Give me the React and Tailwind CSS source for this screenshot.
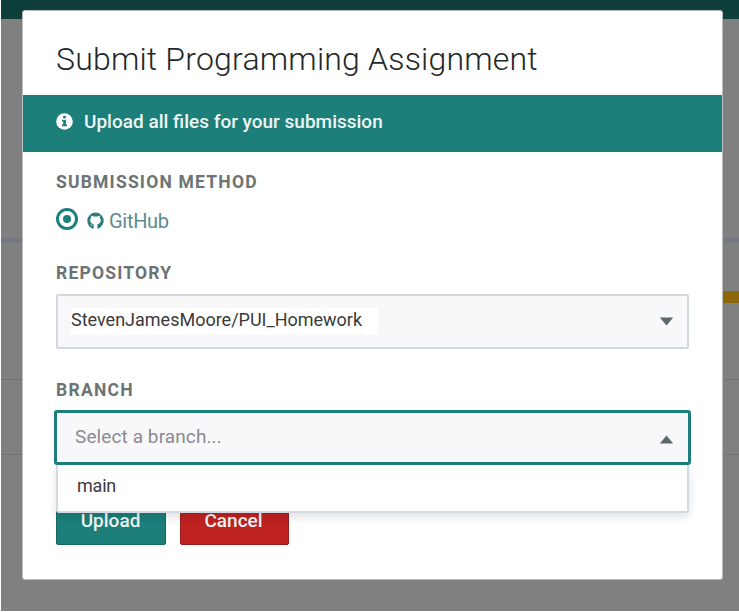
function InfoIcon() {
  return (
    <svg className="block h-[17px] w-[17px]" viewBox="0 0 17 17">
      <circle cx="8.5" cy="8.5" r="8.3" fill="#fff" />
      <path fill="#1c7f7a" d="M7.1 3h2.8v2.3H7.1zM6 6.7h3.9v4.8H11v1.7H6v-1.7h1.2V8.4H6z" />
    </svg>
  );
}

function GitHubIcon() {
  return (
    <svg className="block h-[17px] w-[17px]" viewBox="0 0 17 17">
      <path
        fill="#2f7d80"
        fillRule="evenodd"
        d="M8.500.5a8.200 8.200 0 0 1 8.200 8.200c0 3.700-2.400 6.700-5.700 7.800-.4 0-.6-.1-.6-.4v-2.600c0-.8-.2-1.200-.6-1.500 2-.2 3.700-1.100 3.700-3.900 0-.9-.3-1.600-.8-2.200.1-.4.3-1.200-.1-2.200-.8-.1-1.600.4-2.300.9a7.600 7.600 0 0 0-3.600 0C6 4.100 5.200 3.600 4.400 3.700c-.4 1-.2 1.800-.1 2.200-.5.6-.8 1.300-.8 2.200 0 2.800 1.700 3.700 3.700 3.900-.3.200-.5.600-.6 1.100-.8.400-1.700.3-2.200-.6-.4-.6-.9-.8-1.400-.8.7.4.9.9 1.200 1.600.4.800 1.200 1.100 2.400.9v1.900c0 .3-.2.4-.6.4A8.200 8.200 0 0 1 .3 8.700 8.200 8.200 0 0 1 8.500.5z M5 6.500c-.5.300-.7.800-.7 1.600 0 2.500 1.600 3.100 4.200 3.100s4.200-.6 4.200-3.100c0-.8-.2-1.300-.7-1.600-.8-.4-2 0-3.500 0s-2.700-.4-3.500 0z"
      />
      <path fill="#fff" d="M4 6.200c.8-1 1.600-.8 4.500-.8s3.700-.2 4.500.8c1.400 2.500.4 5.300-2.500 5.900.3.400.4.900.4 1.500V17H6.100v-3.400c0-.6.1-1.100.4-1.500C3.600 11.500 2.600 8.700 4 6.200z" />
      <path fill="#2f7d80" d="M5.300 12.500h1.400v4H5.300zM10.400 12.500h1.400v4h-1.400z" />
    </svg>
  );
}

function Backdrop() {
  return (
    <div className="flex h-[611px] flex-col bg-[#808080]">
      <div className="h-[19px] bg-[#0f3f3d]" />
      <div className="h-[219px]" />
      <div className="h-[5px] bg-[#757880]" />
      <div className="h-[48px]" />
      <div className="h-[12px] w-[40px] self-end bg-[#8c660a]" />
      <div className="h-[76px]" />
      <div className="h-px bg-[#727274]" />
      <div className="h-[74px]" />
      <div className="h-px bg-[#727274]" />
    </div>
  );
}

function Label({ children }) {
  return (
    <span className="text-[17.5px] leading-5 font-bold whitespace-nowrap text-[#6b7374]">{children}</span>
  );
}

export default function App() {
  return (
    <div className="relative h-[612px] w-[739px] overflow-hidden bg-white pl-px font-['Roboto','Liberation_Sans',sans-serif]">
      <Backdrop />
      <div className="absolute top-[10px] left-[22px] flex h-[570px] w-[701px] flex-col overflow-hidden rounded-[3px] border border-[#b9bdbd] bg-white">
        <header className="flex h-[84px] shrink-0 items-center pl-[33px]">
          <h1 className="pt-[11px] text-[32px] leading-10 font-light tracking-[0.2px] whitespace-nowrap text-[#222829]">
            Submit Programming Assignment
          </h1>
        </header>
        <div className="-mx-px flex h-[57px] shrink-0 items-center gap-[11px] bg-[#1c7f7a] pb-[4px] pl-[34px] text-[#eef6f5]">
          <InfoIcon />
          <span className="text-[19px] leading-6 font-medium whitespace-nowrap">Upload all files for your submission</span>
        </div>

        <form className="flex flex-col items-start px-[33px] pt-[20px]">
          <Label><span className="tracking-[1.2px]">SUBMISSION METHOD</span></Label>
          <div className="mt-[15px] flex h-6 items-center">
            <span className="flex h-[22px] w-[22px] items-center justify-center rounded-full border-[3px] border-[#1c7f7a]">
              <span className="h-[8px] w-[8px] rounded-full bg-[#1c7f7a]" />
            </span>
            <span className="mt-[3px] ml-[9px]"><GitHubIcon /></span>
            <span className="mt-[3px] ml-[5px] text-[20px] leading-6 tracking-[-0.3px] text-[#5b8c8e]">GitHub</span>
          </div>
          <div className="mt-[32px] flex"><Label><span className="tracking-[1.2px]">REPOSITORY</span></Label></div>
          <div className="mt-[11px] flex h-[55px] w-[633px] items-center justify-between rounded-[2px] border-2 border-[#d3d8df] bg-[#f8f8fb] pr-[13px] pl-[13px]">
            <span className="mb-px h-[27px] w-[307px] bg-white text-[18px] leading-[24px] whitespace-nowrap text-[#3a3a3a]">
              StevenJamesMoore/PUI_Homework
            </span>
            <svg className="block h-[9px] w-[15px]" viewBox="0 0 15 9"><path d="M.8.6h13.400L7.500 8.400z" fill="#5c686b" /></svg>
          </div>
          <div className="mt-[31px] flex"><Label><span className="tracking-[1.25px]">BRANCH</span></Label></div>
          <div className="mt-[10px] -ml-[2px] flex h-[55px] w-[637px] items-center justify-between rounded-[3px] border-[3px] border-[#1c7f7a] bg-[#f8f8fb] pr-[14px] pl-[18px]">
            <span className="mb-[1px] text-[19px] leading-6 tracking-[0.1px] whitespace-nowrap text-[#8b8b8e]">Select a branch...</span>
            <svg className="mt-1 block h-[9px] w-[15px]" viewBox="0 0 15 9"><path d="M.8 8.400h13.400L7.500.6z" fill="#5c686b" /></svg>
          </div>
          <div className="z-10 flex h-[48px] w-[633px] items-center rounded-b-[3px] border-2 border-t-0 border-[#d3d8e3] bg-white pb-[5px] pl-[19px] shadow-[0_4px_10px_rgba(0,0,0,0.12)]">
            <span className="text-[18px] leading-6 tracking-[-0.2px] text-[#3a3a3a]">main</span>
          </div>
          <div className="-mt-[16px] flex gap-[14px] text-[19px] leading-6 font-medium text-[#eef6f5]">
            <button type="button" className="flex h-[48px] w-[110px] items-center justify-center rounded-[2px] border border-[#17665f] bg-[#1c7f7a] pr-px">Upload</button>
            <button type="button" className="flex h-[48px] w-[109px] items-center justify-center rounded-[2px] border border-[#981f1f] bg-[#be2221] pr-[2px]">Cancel</button>
          </div>
        </form>
      </div>
    </div>
  );
}
